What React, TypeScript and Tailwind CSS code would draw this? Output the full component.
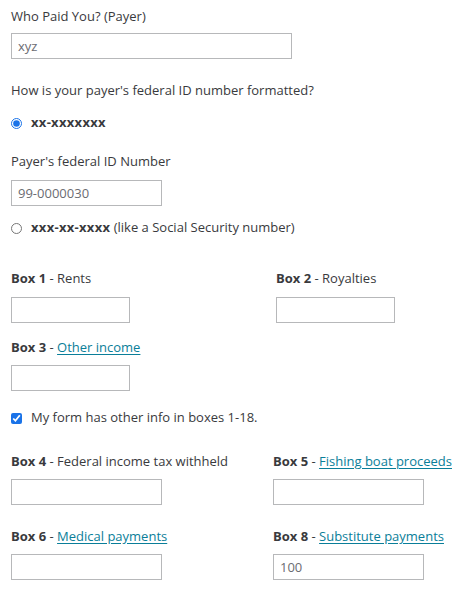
import React from "react";

const font = { fontFamily: '"Open Sans", "Liberation Sans", sans-serif' };

const Field = ({ value, w }: { value?: string; w: string }) => (
  <input
    defaultValue={value}
    className={`${w} h-[26px] border border-[#b7b8ba] bg-white px-[6px] text-[13px] text-[#6b6c72] outline-none`}
  />
);

const Link = ({ children }: { children: React.ReactNode }) => (
  <a href="#" className="text-[#0a7e99] underline underline-offset-2">{children}</a>
);

const BoxLabel = ({ n, children }: { n: string; children: React.ReactNode }) => (
  <div className="h-5 leading-5 text-[13px] text-[#393a3d] whitespace-nowrap">
    <span className="font-bold">Box {n}</span> - {children}
  </div>
);

export default function App() {
  return (
    <div style={font} className="w-[470px] h-[597px] bg-white pl-[11px] text-[#393a3d] text-[13px] flex flex-col">
      <div className="mt-[6px] h-5 leading-5">Who Paid You? (Payer)</div>
      <div className="mt-[7px]"><Field value="xyz" w="w-[281px]" /></div>

      <div className="mt-[21px] h-5 leading-5">How is your payer's federal ID number formatted?</div>

      <label className="mt-[13px] h-5 flex items-center gap-[9px]">
        <input type="radio" name="fmt" defaultChecked className="ml-[0px] w-[11px] h-[11px] m-0 accent-[#1a73e8]" />
        <span className="font-bold tracking-[0.3px]">xx-xxxxxxx</span>
      </label>

      <div className="mt-[18px] h-5 leading-5">Payer's federal ID Number</div>
      <div className="mt-[9px]"><Field value="99-0000030" w="w-[151px]" /></div>

      <label className="mt-[12px] h-5 flex items-center gap-[9px]">
        <input type="radio" name="fmt" className="w-[11px] h-[11px] m-0" />
        <span><span className="font-bold tracking-[0.3px]">xxx-xx-xxxx</span> (like a Social Security number)</span>
      </label>

      <div className="mt-[30px] grid grid-cols-[265px_1fr]">
        <div>
          <BoxLabel n="1">Rents</BoxLabel>
          <div className="mt-[9px]"><Field w="w-[119px]" /></div>
        </div>
        <div>
          <BoxLabel n="2">Royalties</BoxLabel>
          <div className="mt-[9px]"><Field w="w-[119px]" /></div>
        </div>
      </div>

      <div className="mt-[14px]">
        <BoxLabel n="3"><Link>Other income</Link></BoxLabel>
        <div className="mt-[8px]"><Field w="w-[119px]" /></div>
      </div>

      <label className="mt-[17px] h-5 flex items-center gap-[9px]">
        <input type="checkbox" defaultChecked className="w-[11px] h-[11px] m-0 accent-[#1a73e8]" />
        <span>My form has other info in boxes 1-18.</span>
      </label>

      <div className="mt-[23px] grid grid-cols-[262px_1fr]">
        <div>
          <BoxLabel n="4">Federal income tax withheld</BoxLabel>
          <div className="mt-[8px]"><Field w="w-[151px]" /></div>
        </div>
        <div>
          <BoxLabel n="5"><Link>Fishing boat proceeds</Link></BoxLabel>
          <div className="mt-[8px]"><Field w="w-[151px]" /></div>
        </div>
      </div>

      <div className="mt-[21px] grid grid-cols-[262px_1fr]">
        <div>
          <BoxLabel n="6"><Link>Medical payments</Link></BoxLabel>
          <div className="mt-[8px]"><Field w="w-[151px]" /></div>
        </div>
        <div>
          <BoxLabel n="8"><Link>Substitute payments</Link></BoxLabel>
          <div className="mt-[8px]"><Field value="100" w="w-[151px]" /></div>
        </div>
      </div>
    </div>
  );
}
